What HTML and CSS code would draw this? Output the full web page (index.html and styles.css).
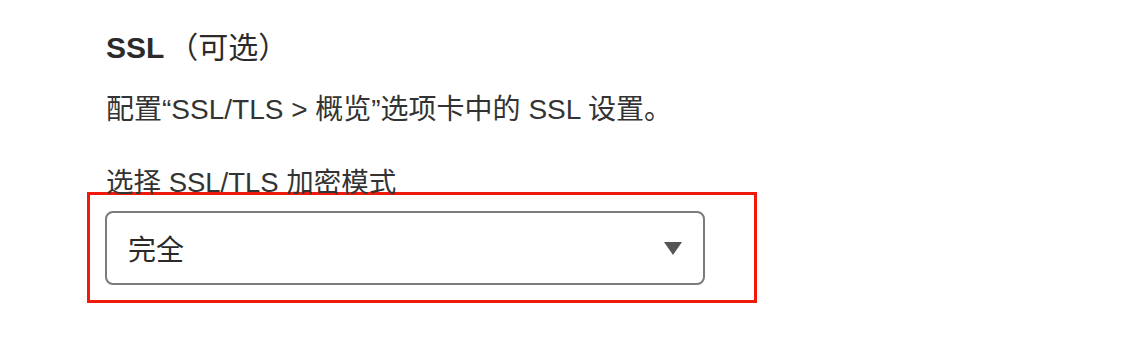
FILE: index.html
```html
<!DOCTYPE html>
<html lang="zh-CN">
<head>
    <meta charset="UTF-8">
    <meta name="viewport" content="width=device-width, initial-scale=1.0">
    <title>SSL 设置</title>
    <link rel="stylesheet" href="styles.css">
</head>
<body>

    <!-- SSL section -->
    <div class="section">
        <h2 class="section-title">SSL <span class="optional">（可选）</span></h2>
        <p class="section-desc">配置“SSL/TLS &gt; 概览”选项卡中的 SSL 设置。</p>

        <label class="field-label" for="ssl-mode">选择 SSL/TLS 加密模式</label>
        <div class="highlight">
            <div class="select" id="ssl-mode" role="combobox" aria-expanded="false">
                <span class="select-value">完全</span>
                <span class="caret"></span>
            </div>
        </div>
    </div>

</body>
</html>
```

FILE: styles.css
```css
body {
    margin: 0;
    background: #fff;
    font-family: "Liberation Sans", "Noto Sans CJK SC", sans-serif;
    color: #333;
}
.section {
    padding: 31px 0 0 106px;
}
.section-title {
    margin: 0;
    font-size: 30px;
    line-height: 34px;
    font-weight: bold;
    color: #2b2b2b;
}
.optional {
    font-weight: normal;
    margin-left: -4px;
}
.section-desc {
    margin: 27px 0 0;
    font-size: 28px;
    line-height: 36px;
}
.field-label {
    display: block;
    margin: 42px 0 -4px;
    font-size: 27.5px;
    line-height: 26px;
}
.highlight {
    width: 600px;
    margin-left: -19px;
    padding: 16px 49px 15px 15px;
    border: 3px solid #f01a0c;
}
.select {
    display: flex;
    align-items: center;
    justify-content: space-between;
    height: 70px;
    padding: 0 21px 0 21px;
    border: 2px solid #7b7b7b;
    border-radius: 8px;
    font-size: 28px;
    color: #2a2a2a;
}
.caret {
    width: 0;
    height: 0;
    border-left: 9.5px solid transparent;
    border-right: 9.5px solid transparent;
    border-top: 13px solid #555;
}
```
